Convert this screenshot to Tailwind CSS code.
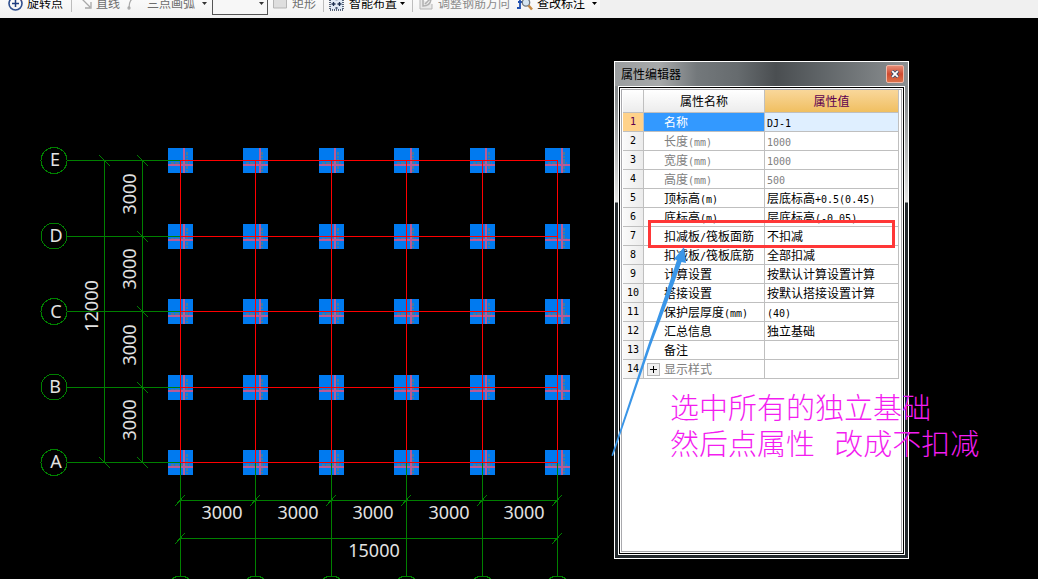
<!DOCTYPE html>
<html lang="zh-CN">
<head>
<meta charset="utf-8">
<meta name="viewport" content="width=device-width, initial-scale=1">
<title>属性编辑器</title>
<script src="https://cdn.jsdelivr.net/npm/@tailwindcss/browser@4"></script>
</head>
<body class="flex h-screen flex-col overflow-hidden bg-black font-['Noto_Sans_CJK_SC',sans-serif] text-xs text-black">

<header class="h-[18px] shrink-0 overflow-hidden bg-[#f0f0f0]">
  <div class="-mt-3 flex h-[30px] w-[600px] items-center bg-linear-to-b from-white to-[#f1f1f1] pl-2 whitespace-nowrap">
    <button class="flex h-4 items-center gap-1">
      <svg class="size-[15px]" viewBox="0 0 15 15" fill="none"><circle cx="7.500" cy="7.500" r="6.500" stroke="#2f4f8f" stroke-width="1.600"/><path d="M7.500 4v7M4 7.500h7" stroke="#1d3c80" stroke-width="1.500"/><path d="M12 1.500l2 2.500" stroke="#d04030" stroke-width="2"/></svg>
      旋转点
    </button>
    <span class="ml-2 h-[18px] w-px bg-[#bdbdbd]"></span>
    <button class="ml-2 flex h-4 items-center gap-1 text-[#6d6d6d]">
      <svg class="size-3" viewBox="0 0 12 12" fill="none" stroke="#a8a8a8" stroke-width="1.300"><path d="M0 0l10 10M11 5v6H5"/></svg>
      直线
    </button>
    <button class="ml-[7px] flex h-4 items-center gap-2 text-[#6d6d6d]">
      <svg class="h-4 w-3" viewBox="0 0 12 16" fill="none" stroke="#a8a8a8" stroke-width="1.300"><path d="M2 13C2 8 4 3 9 2"/><circle cx="2" cy="13" r="1"/></svg>
      三点画弧
    </button>
    <svg class="ml-[7px] h-[3px] w-[5px]" viewBox="0 0 5 3"><path d="M0 0h5L2.500 3z" fill="#333"/></svg>
    <div class="relative ml-[5px] h-[23px] w-14">
      <select aria-label="画弧参数" class="h-full w-full appearance-none border border-[#555] bg-[#f7f7f7]"><option></option></select>
      <svg class="pointer-events-none absolute top-2.5 right-1 h-[3px] w-[5px]" viewBox="0 0 5 3"><path d="M0 0h5L2.500 3z" fill="#333"/></svg>
    </div>
    <button class="ml-[5px] flex h-4 items-center gap-[5px] text-[#6d6d6d]">
      <svg class="h-3 w-3.5" viewBox="0 0 14 12"><path d="M.5.5h13v10.500H.5z" fill="#dedede" stroke="#b5b5b5"/></svg>
      矩形
    </button>
    <span class="ml-[7px] h-[18px] w-px bg-[#bdbdbd]"></span>
    <button class="ml-[5px] flex h-4 items-center gap-[5px]">
      <svg class="size-[15px]" viewBox="0 0 15 15" fill="none"><path d="M1 1h13v13H1z" fill="#dfe9f5" stroke="#24344f" stroke-dasharray="1 1" stroke-width="1.500"/><path d="M4.500 6v4M2.500 8h4M10.500 6v4M8.500 8h4M6.500 3.500h2M6.500 12h2" stroke="#1c2f50" stroke-width="1.300"/></svg>
      智能布置
    </button>
    <svg class="ml-[3px] h-[3px] w-[5px]" viewBox="0 0 5 3"><path d="M0 0h5L2.500 3z" fill="#000"/></svg>
    <span class="ml-[7px] h-[18px] w-px bg-[#bdbdbd]"></span>
    <button class="ml-1.5 flex h-4 items-center gap-1 text-[#8a8a8a]">
      <svg class="h-3.5 w-[15px]" viewBox="0 0 15 14" fill="none"><path d="M1 3v10h12V8" stroke="#b5b5b5" fill="#e8e8e8"/><path d="M4 4v6c5 0 8-3 8-8l-6 6" stroke="#b0b0b0" stroke-width="1.500"/></svg>
      调整钢筋方向
    </button>
    <button class="ml-[7px] flex h-4 items-center gap-1">
      <svg class="size-4" viewBox="0 0 16 16" fill="none"><path d="M5 2H3v5M1 7h4M3 7v6H0" stroke="#2050b0" stroke-width="1.800"/><circle cx="9" cy="7.500" r="3.700" fill="#d5e5f2" stroke="#707880" stroke-width="1.300"/><path d="M11.500 10.500l3.500 4" stroke="#c58a45" stroke-width="2.500"/></svg>
      查改标注
    </button>
    <svg class="ml-[7px] h-[3px] w-[5px]" viewBox="0 0 5 3"><path d="M0 0h5L2.500 3z" fill="#000"/></svg>
  </div>
</header>

<main class="relative flex-1 overflow-hidden bg-black">
  <svg class="absolute inset-0 h-full w-full" role="img" aria-label="独立基础平面图">
    <defs>
      <g id="pad">
        <path d="M0 0h25v25H0z" fill="#007af0"/>
        <path d="M18.500 4v20" stroke="#4a7a9c" stroke-width="2" stroke-dasharray="3 1 2 1"/>
        <path d="M3 14.500h19" stroke="#4a7a9c" stroke-width="2" stroke-dasharray="3 1 4 1"/>
      </g>
      <g id="pads">
        <use href="#pad" x="168"/><use href="#pad" x="243"/><use href="#pad" x="319"/><use href="#pad" x="394"/><use href="#pad" x="470"/><use href="#pad" x="545"/>
        <path d="M184 0v25M260 0v25M335 0v25M411 0v25M486 0v25M562 0v25" stroke="#b85a98" stroke-width="2"/>
      </g>
      <path id="bars" d="M168 0h25M243 0h25M319 0h25M394 0h25M470 0h25M545 0h25" stroke="#b85a98" stroke-width="2"/>
    </defs>
    <g transform="translate(0 -18)">
      <g shape-rendering="crispEdges">
        <use href="#pads" y="148"/><use href="#pads" y="224"/><use href="#pads" y="299"/><use href="#pads" y="375"/><use href="#pads" y="450"/>
        <use href="#bars" y="165"/><use href="#bars" y="240"/><use href="#bars" y="316"/><use href="#bars" y="391"/><use href="#bars" y="467"/>
        <g fill="none" stroke="#008000">
          <path d="M67 160.500h113M67 236.500h113M67 311.500h113M67 387.500h113M67 462.500h113"/>
          <path d="M104.500 160v303M142.500 160v303"/>
          <path d="M180.500 463v113M255.500 463v113M331.500 463v113M406.500 463v113M482.500 463v113M557.500 463v113"/>
          <path d="M180 500.500h378M180 538.500h378"/>
        </g>
        <g fill="none" stroke="#ff0000">
          <path d="M180 160.500h378M180 236.500h378M180 311.500h378M180 387.500h378M180 462.500h378"/>
          <path d="M180.500 160v303M255.500 160v303M331.500 160v303M406.500 160v303M482.500 160v303M557.500 160v303"/>
        </g>
        <g fill="none" stroke="#008000">
          <path d="M99 155l11 11M99 457l11 11M137 155l11 11M137 231l11 11M137 306l11 11M137 382l11 11M137 457l11 11"/>
          <path d="M175 506l10-11M250 506l10-11M326 506l10-11M401 506l10-11M477 506l10-11M552 506l10-11M175 544l10-11M552 544l10-11"/>
          <circle cx="54" cy="160.500" r="13"/><circle cx="54" cy="236" r="13"/><circle cx="54" cy="311.500" r="13"/><circle cx="54" cy="387" r="13"/><circle cx="54" cy="462.500" r="13"/>
          <circle cx="180.500" cy="589" r="13"/><circle cx="255.500" cy="589" r="13"/><circle cx="331.500" cy="589" r="13"/><circle cx="406.500" cy="589" r="13"/><circle cx="482.500" cy="589" r="13"/><circle cx="557.500" cy="589" r="13"/>
        </g>
      </g>
      <g class="font-['Noto_Sans',sans-serif] text-[18px]" fill="#e2e2e2" text-anchor="middle">
        <text x="55" y="166">E</text><text x="56" y="242">D</text><text x="56" y="318">C</text><text x="55" y="393">B</text><text x="56" y="468">A</text>
        <text x="222" y="519">3000</text><text x="298" y="519">3000</text><text x="373" y="519">3000</text><text x="449" y="519">3000</text><text x="524" y="519">3000</text>
        <text x="374" y="557">15000</text>
        <text transform="translate(136 194) rotate(-90)">3000</text>
        <text transform="translate(136 269) rotate(-90)">3000</text>
        <text transform="translate(136 345) rotate(-90)">3000</text>
        <text transform="translate(136 420) rotate(-90)">3000</text>
        <text transform="translate(98 306) rotate(-90)">12000</text>
      </g>
    </g>
  </svg>

  <!-- 属性编辑器 floating window -->
  <section class="absolute top-[43px] left-[614px] flex h-[498px] w-[295px] flex-col border border-white bg-[linear-gradient(to_bottom,#7d8184_0px,#8b8f91_40px,#e4e4e4_140px,#23292d_141px)] px-[3px] pb-[3px]">
    <div class="-mx-[3px] flex h-6 shrink-0 items-center justify-between bg-[linear-gradient(to_right,#9a9d9f_0%,#a7a9aa_15%,#73787b_28%,#666b6e_42%,#4a4e51_55%,#5f6467_70%,#8c9092_100%)] pr-1 pl-1.5">
      <h1 class="text-xs leading-4">属性编辑器</h1>
      <button aria-label="关闭" class="flex h-[18px] w-[18px] items-center justify-center rounded-xs border border-[#f0b8a8] bg-linear-to-b from-[#e58a74] via-[#cf4a30] to-[#dc7048]">
        <svg class="size-2" viewBox="0 0 8 8"><path d="M1 1l6 6M7 1L1 7" stroke="#40506a" stroke-width="3.500"/><path d="M1.200 1.200l5.600 5.600M6.800 1.200L1.200 6.800" stroke="#fff" stroke-width="1.800"/></svg>
      </button>
    </div>
    <div class="flex flex-1 border border-white bg-white">
      <div class="flex flex-1 border border-black p-px">
        <div class="flex-1 border border-[#a9a9ad] px-px">
          <table class="w-[276px] table-fixed border-separate border-spacing-0 leading-[18px] [&_td]:overflow-hidden [&_td]:border-r [&_td]:border-b [&_td]:border-[#bfbfbf] [&_td]:p-0 [&_td]:whitespace-nowrap [&_th]:border-r [&_th]:border-b [&_th]:border-[#bfbfbf] [&_th]:p-0 [&_th]:font-normal [&_tbody_tr]:h-[19px] [&_tbody_th]:bg-linear-to-r [&_tbody_th]:from-[#fafafa] [&_tbody_th]:to-[#ececec] [&_tbody_th]:font-['DejaVu_Sans_Mono',monospace] [&_tbody_th]:text-[10px] [&_tbody_th]:leading-none [&_i]:font-['DejaVu_Sans_Mono',monospace] [&_i]:text-[10px] [&_i]:leading-none [&_i]:not-italic">
            <colgroup><col class="w-[21px]"><col class="w-[121px]"><col class="w-[134px]"></colgroup>
            <thead><tr class="h-[23px]">
              <th class="bg-linear-to-b from-white to-[#ececec]" aria-label="序号"></th>
              <th scope="col" class="bg-linear-to-b from-white to-[#ececec]">属性名称</th>
              <th scope="col" class="bg-linear-to-b from-[#f9d79a] to-[#f0bf60] text-[#5c0050]">属性值</th>
            </tr></thead>
            <tbody>
              <tr><th scope="row" class="bg-[#ffd28a] !from-[#ffd28a] !to-[#ffd28a] text-[#5c0050]">1</th><td class="bg-[#3399ff] text-white"><span class="ml-5">名称</span></td><td class="bg-[#dfefff]"><i class="ml-0.5">DJ-1</i></td></tr>
              <tr><th scope="row">2</th><td class="text-[#808080]"><span class="ml-5">长度<i>(mm)</i></span></td><td class="text-[#808080]"><i class="ml-0.5">1000</i></td></tr>
              <tr><th scope="row">3</th><td class="text-[#808080]"><span class="ml-5">宽度<i>(mm)</i></span></td><td class="text-[#808080]"><i class="ml-0.5">1000</i></td></tr>
              <tr><th scope="row">4</th><td class="text-[#808080]"><span class="ml-5">高度<i>(mm)</i></span></td><td class="text-[#808080]"><i class="ml-0.5">500</i></td></tr>
              <tr><th scope="row">5</th><td><span class="ml-5">顶标高<i>(m)</i></span></td><td><span class="ml-0.5">层底标高<i>+0.5(0.45)</i></span></td></tr>
              <tr><th scope="row">6</th><td><span class="ml-5">底标高<i>(m)</i></span></td><td><span class="ml-0.5">层底标高<i>(-0.05)</i></span></td></tr>
              <tr><th scope="row">7</th><td><span class="ml-5">扣减板<i>/</i>筏板面筋</span></td><td><span class="ml-0.5">不扣减</span></td></tr>
              <tr><th scope="row">8</th><td><span class="ml-5">扣减板<i>/</i>筏板底筋</span></td><td><span class="ml-0.5">全部扣减</span></td></tr>
              <tr><th scope="row">9</th><td><span class="ml-5">计算设置</span></td><td><span class="ml-0.5">按默认计算设置计算</span></td></tr>
              <tr><th scope="row">10</th><td><span class="ml-5">搭接设置</span></td><td><span class="ml-0.5">按默认搭接设置计算</span></td></tr>
              <tr><th scope="row">11</th><td><span class="ml-5">保护层厚度<i>(mm)</i></span></td><td><i class="ml-0.5">(40)</i></td></tr>
              <tr><th scope="row">12</th><td><span class="ml-5">汇总信息</span></td><td><span class="ml-0.5">独立基础</span></td></tr>
              <tr><th scope="row">13</th><td><span class="ml-5">备注</span></td><td></td></tr>
              <tr><th scope="row">14</th><td class="text-[#808080]"><div class="flex h-[18px] items-center gap-1 pl-[3px]"><button aria-label="展开" class="flex size-[13px] items-center justify-center border border-[#b8b8b8] bg-[#f0f0f0]"><svg class="size-[9px]" viewBox="0 0 9 9"><path d="M4.500 1v7M1 4.500h7" stroke="#000"/></svg></button>显示样式</div></td><td></td></tr>
            </tbody>
          </table>
        </div>
      </div>
    </div>
  </section>

  <!-- annotations drawn over the window -->
  <div class="absolute top-[202px] left-[648px] h-7 w-[247px] border-3 border-[#ff3737]"></div>
  <svg class="absolute top-[229px] left-[611px] h-[210px] w-20" viewBox="0 0 80 210" aria-hidden="true"><path d="M73 0L75 16L70.500 15L57 53L40 98L2 209L0.500 208.500L37.500 97L53 52L66 13L63 12z" fill="#3a96e8"/></svg>
  <p class="absolute top-[370px] left-[670px] text-[29px] leading-9 font-light whitespace-pre text-[#f31df0]">选中所有的独立基础
然后点属性&nbsp;&nbsp;&nbsp;改成不扣减</p>
</main>
</body>
</html>
